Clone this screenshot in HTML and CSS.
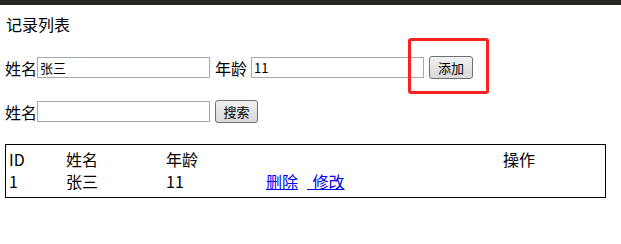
FILE: index.html
```html
<!DOCTYPE html>
<html lang="zh">
<head>
<meta charset="utf-8">
<title>记录列表</title>
<link rel="stylesheet" href="styles.css">
</head>
<body>
<div class="topbar"></div>
<main class="page">
  <h1 class="title">记录列表</h1>
  <div class="form-row">
    <label class="label">姓名</label><input class="field" type="text" value="张三">
    <label class="label gap-l">年龄</label><input class="field gap-i" type="text" value="11">
    <span class="btn-wrap"><button class="btn">添加</button><span class="highlight"></span></span>
  </div>
  <div class="form-row second">
    <label class="label">姓名</label><input class="field" type="text" value="">
    <button class="btn gap-b">搜索</button>
  </div>
  <div class="table">
    <div class="row">
      <span>ID</span><span>姓名</span><span>年龄</span><span></span><span>操作</span>
    </div>
    <div class="row">
      <span>1</span><span>张三</span><span>11</span><span class="links"><a href="#">删除</a><a href="#" class="edit">&nbsp;修改</a></span><span></span>
    </div>
  </div>
</main>
</body>
</html>
```
FILE: styles.css
```css
html, body {
  margin: 0;
  padding: 0;
  background: #ffffff;
}
body {
  font-family: "Noto Sans CJK SC", "Noto Sans", sans-serif;
  font-size: 16px;
  color: #000;
}
.topbar {
  height: 5px;
  background: #272721;
}
.page {
  padding: 0 0 0 5px;
}
.title {
  margin: 9px 0 0 1px;
  font-size: 16px;
  font-weight: normal;
  line-height: 20px;
}
.form-row {
  display: flex;
  align-items: center;
  height: 23px;
  margin-top: 22px;
}
.form-row.second {
  margin-top: 21px;
}
.label {
  line-height: 20px;
}
.gap-l {
  margin-left: 5px;
}
.field {
  box-sizing: border-box;
  width: 173px;
  height: 21px;
  margin: 0;
  padding: 0 2px;
  border: 1px solid #a9a9a9;
  font-family: "Noto Sans CJK SC", sans-serif;
  font-size: 13px;
  color: #000;
  outline: none;
}
.gap-i {
  margin-left: 4px;
}
.btn-wrap {
  position: relative;
  margin-left: 5px;
  display: inline-flex;
}
.btn {
  box-sizing: border-box;
  width: 44px;
  height: 23px;
  padding: 0;
  border: 1px solid #707070;
  border-radius: 3px;
  background: linear-gradient(#f2f2f2, #e3e3e3 50%, #d9d9d9);
  font-family: "Noto Sans CJK SC", sans-serif;
  font-size: 13px;
  color: #000;
}
.gap-b {
  margin-left: 5px;
  width: 43px;
}
.highlight {
  position: absolute;
  left: -21px;
  top: -18px;
  width: 75px;
  height: 50px;
  border: 3px solid #ff2020;
  border-radius: 3px;
}
.table {
  box-sizing: border-box;
  width: 601px;
  height: 54px;
  margin-top: 21px;
  border: 1px solid #000;
  padding: 3px 0 0 3px;
}
.row {
  display: grid;
  grid-template-columns: 57px 100px 100px 237px 1fr;
  height: 22px;
  line-height: 22px;
}
.links a {
  color: #0000ee;
  text-decoration: underline;
}
.links .edit {
  margin-left: 9px;
  word-spacing: 2px;
}
```
